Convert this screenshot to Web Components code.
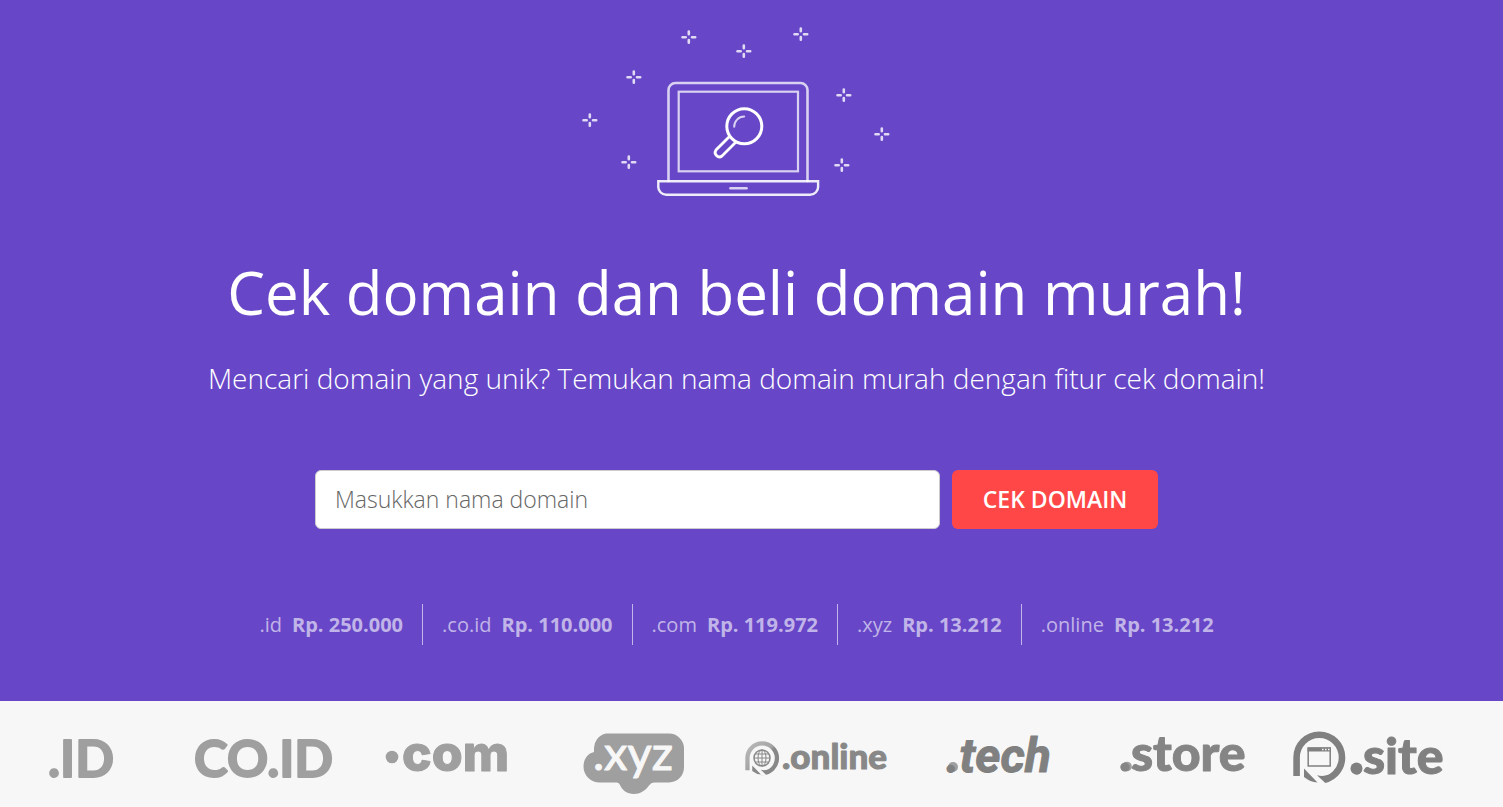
<!DOCTYPE html>
<html lang="id">
<head>
<meta charset="utf-8">
<meta name="viewport" content="width=device-width, initial-scale=1">
<title>Cek domain</title>
<style>
body {
    margin: 0;
    background: #f7f7f7;
    font-family: "Open Sans", "Noto Sans", sans-serif;
}
</style>
</head>
<body>

<domain-hero>
    <laptop-art slot="art"></laptop-art>
    <span slot="title">Cek domain dan beli domain murah!</span>
    <span slot="subtitle">Mencari domain yang unik? Temukan nama domain murah dengan fitur cek domain!</span>
    <domain-search slot="search" placeholder="Masukkan nama domain">CEK DOMAIN</domain-search>
    <domain-price slot="prices" tld=".id">Rp. 250.000</domain-price>
    <domain-price slot="prices" tld=".co.id">Rp. 110.000</domain-price>
    <domain-price slot="prices" tld=".com">Rp. 119.972</domain-price>
    <domain-price slot="prices" tld=".xyz">Rp. 13.212</domain-price>
    <domain-price slot="prices" tld=".online">Rp. 13.212</domain-price>
</domain-hero>

<logo-strip>
    <tld-logo name="id"></tld-logo>
    <tld-logo name="coid"></tld-logo>
    <tld-logo name="com"></tld-logo>
    <tld-logo name="xyz"></tld-logo>
    <tld-logo name="online"></tld-logo>
    <tld-logo name="tech"></tld-logo>
    <tld-logo name="store"></tld-logo>
    <tld-logo name="site"></tld-logo>
</logo-strip>

<script>
const templateHero = document.createElement('template');
templateHero.innerHTML = `
<style>
:host {
    display: block;
    background: #6747c7;
    color: #fff;
}
section {
    display: flex;
    flex-direction: column;
    align-items: center;
    padding: 28px 30px 56px 0;
    text-align: center;
}
h1 {
    margin: 56px 0 0;
    font-size: 60px;
    font-weight: 400;
    line-height: 80px;
}
p {
    margin: 26px 0 0;
    font-size: 28px;
    font-weight: 300;
    line-height: 40px;
}
.search {
    margin-top: 72px;
}
.prices {
    display: flex;
    flex-wrap: wrap;
    justify-content: center;
    margin-top: 75px;
}
::slotted(domain-price:not(:last-child)) {
    border-right: 1px solid rgba(255, 255, 255, .6);
}
</style>
<section>
    <slot name="art"></slot>
    <h1><slot name="title"></slot></h1>
    <p><slot name="subtitle"></slot></p>
    <div class="search"><slot name="search"></slot></div>
    <div class="prices"><slot name="prices"></slot></div>
</section>
`;

class DomainHero extends HTMLElement {

    constructor() {
        super();
        this.attachShadow({mode: 'open'});
        this.shadowRoot.appendChild(templateHero.content.cloneNode(true));
    }
}

customElements.define('domain-hero', DomainHero);

const templateLaptop = document.createElement('template');
templateLaptop.innerHTML = `
<style>
:host {
    display: block;
}
svg {
    display: block;
    overflow: visible;
}
</style>
<svg width="308" height="168" viewBox="0 0 308 168" fill="none" stroke="#fff" stroke-width="2.600" stroke-linecap="round" aria-hidden="true">
    <g stroke-opacity=".75">
        <path d="M85.500 153V62a7 7 0 0 1 7-7h125a7 7 0 0 1 7 7v91"/>
        <rect x="95.700" y="63.700" width="119.300" height="79.600" stroke-width="2.200"/>
        <path d="M147.500 160.300h16"/>
    </g>
    <path d="M75.300 153.300h159.800v5a8 8 0 0 1-8 8.500h-143.800a8 8 0 0 1-8-8.500z" stroke-width="2.400" stroke-opacity=".9"/>
    <circle cx="161.300" cy="98.300" r="17.500" stroke-width="3"/>
    <path d="M151.200 98.800a10 10 0 0 1 10-10.200" stroke-width="2" stroke-opacity=".75"/>
    <path d="M146.500 108.500l-13.500 13.500a4.300 4.300 0 0 0 6 6l13.500-13.500" stroke-width="2.800"/>
    <g class="stars" stroke-opacity=".8"></g>
</svg>
`;

class LaptopArt extends HTMLElement {

    constructor() {
        super();
        this.attachShadow({mode: 'open'});
        this.shadowRoot.appendChild(templateLaptop.content.cloneNode(true));
        const stars = [[106, 9], [161, 23], [218, 6], [51, 49], [7, 92], [46, 134], [261, 67], [299, 106], [259, 137]];
        this.shadowRoot.querySelector('.stars').innerHTML = stars.map(([x, y]) =>
            `<path transform="translate(${x} ${y})" d="M-6.500 .300h3.200M3 .300h3.200M-.200-5.500v2.700M-.200 3v2.700"/>`
        ).join('');
    }
}

customElements.define('laptop-art', LaptopArt);

const templateSearch = document.createElement('template');
templateSearch.innerHTML = `
<style>
:host {
    display: block;
}
form {
    display: flex;
    gap: 12px;
    margin: 0;
}
input, button {
    box-sizing: border-box;
    height: 59px;
    border-radius: 6px;
    font-family: inherit;
    font-size: 23px;
}
input {
    width: 625px;
    padding: 0 19px 2px;
    border: 1px solid #ccc;
    background: #fff;
    color: #555;
    font-weight: 300;
}
input::placeholder {
    color: #666;
    opacity: 1;
}
button {
    width: 206px;
    padding: 0 0 2px;
    border: 0;
    background: #ff4747;
    color: #fff;
    font-weight: 600;
    white-space: nowrap;
    cursor: pointer;
}
</style>
<form>
    <input type="text" name="domain">
    <button type="submit"><slot></slot></button>
</form>
`;

class DomainSearch extends HTMLElement {

    constructor() {
        super();
        this.attachShadow({mode: 'open'});
        this.shadowRoot.appendChild(templateSearch.content.cloneNode(true));
        this.shadowRoot.querySelector('form').addEventListener('submit', e => e.preventDefault());
    }

    connectedCallback() {
        const input = this.shadowRoot.querySelector('input');
        input.placeholder = this.getAttribute('placeholder');
        input.setAttribute('aria-label', input.placeholder);
    }
}

customElements.define('domain-search', DomainSearch);

const templatePrice = document.createElement('template');
templatePrice.innerHTML = `
<style>
:host {
    display: flex;
    gap: 10px;
    padding: 0 19px;
    color: rgba(255, 255, 255, .6);
    font-size: 20px;
    line-height: 41px;
    white-space: nowrap;
}
</style>
<span></span>
<strong><slot></slot></strong>
`;

class DomainPrice extends HTMLElement {

    constructor() {
        super();
        this.attachShadow({mode: 'open'});
        this.shadowRoot.appendChild(templatePrice.content.cloneNode(true));
    }

    connectedCallback() {
        this.shadowRoot.querySelector('span').textContent = this.getAttribute('tld');
    }
}

customElements.define('domain-price', DomainPrice);

const templateStrip = document.createElement('template');
templateStrip.innerHTML = `
<style>
:host {
    display: grid;
    grid-template-columns: repeat(8, 1fr);
    padding: 20px 30px 12px 0;
    background: #f7f7f7;
}
</style>
<slot></slot>
`;

class LogoStrip extends HTMLElement {

    constructor() {
        super();
        this.attachShadow({mode: 'open'});
        this.shadowRoot.appendChild(templateStrip.content.cloneNode(true));
    }
}

customElements.define('logo-strip', LogoStrip);

// open ring with a tail, used by .online and .site
const ring = `
    <path d="M7.600 55V36.500a22.700 22.700 0 1 1 22.700 22.700l-3-.300" fill="none" stroke-width="6.600"/>
    <path d="M15 45l14 7.500 8 10.500h-10l-12-8z" fill="#f7f7f7" stroke="none"/>
    <path d="M15 47.500l13.500 14q-7.500-.500-13.500-5.500z" stroke="none"/>
    <path d="M28 54.300l7.500 7q5-1 8-3l-4-4.500q-5 2-11.500.500z" stroke="none"/>
`;

const logos = {
    id: `<text class="geo" x="48" y="56">.ID</text>`,
    coid: `<text class="geo" x="10" y="56">CO.ID</text>`,
    com: `
        <circle cx="24" cy="36" r="6.300"/>
        <text class="com" x="34" y="50">com</text>`,
    xyz: `
        <path d="M54 12.500h63a15 15 0 0 1 15 15v19a15 15 0 0 1-15 15h-15q-3 0-5 3c-4 5.500-9 8.500-15 8.500-7 0-12-4-14-9q-1-2.500-3-2.500h-17a16 16 0 0 1-16.500-16c0-7 4-13 10.500-14.500v-3a15 15 0 0 1 12-15.500z"/>
        <text class="xyz" x="41" y="49">.xyz</text>`,
    online: `
        <defs>
            <linearGradient id="shade" gradientUnits="userSpaceOnUse" x1="5" y1="14" x2="48" y2="58">
                <stop offset="0" stop-color="#bbb"/>
                <stop offset=".5" stop-color="#a5a5a5"/>
                <stop offset=".6" stop-color="#888"/>
            </linearGradient>
        </defs>
        <g fill="#888" stroke="url(#shade)" transform="translate(5.500 13.500) scale(.65)">${ring}</g>
        <g fill="none" stroke="#888" stroke-width="1.500">
            <circle cx="25" cy="37" r="8"/>
            <ellipse cx="25" cy="37" rx="4" ry="8" stroke-width="1"/>
            <path d="M25 29v16M17 37h16M18.500 33h13M18.500 41h13" stroke-width="1"/>
        </g>
        <text class="online" x="45" y="48">.online</text>`,
    tech: `
        <circle cx="32" cy="46" r="5"/>
        <text class="tech" x="25" y="51">.tech</text>`,
    store: `
        <circle cx="22" cy="45.500" r="4.800"/>
        <text class="store" x="14" y="50">.store</text>`,
    site: `
        <g fill="#808080" stroke="#808080">${ring}</g>
        <path d="M19.200 27h22v18h-22z" fill="none" stroke="#808080" stroke-width="1.500"/>
        <path d="M18.500 26.500h23.500v4h-23.500z" fill="#808080"/>
        <path d="M33 28.500h1.500M36 28.500h1.500M39 28.500h1.500" stroke="#f7f7f7" stroke-width="1.500"/>
        <circle cx="67.500" cy="47.500" r="6" fill="#808080"/>
        <text class="site" x="62" y="53">.site</text>`
};

const templateLogo = document.createElement('template');
templateLogo.innerHTML = `
<style>
:host {
    display: block;
}
svg {
    display: block;
    overflow: visible;
    fill: #9f9f9f;
}
text {
    stroke-linejoin: round;
}
.geo {
    font: 700 51px Lato, sans-serif;
    stroke: #9f9f9f;
    stroke-width: 2px;
}
.com {
    font: 800 50px Inter, sans-serif;
    stroke: #9f9f9f;
    stroke-width: 1px;
}
.xyz {
    font: 400 47px Lato, sans-serif;
    fill: #f7f7f7;
    stroke: #f7f7f7;
    stroke-width: 1px;
}
.online {
    font: 900 35px Lato, sans-serif;
    fill: #888;
    stroke: #888;
    stroke-width: 1px;
}
.tech {
    font: italic 700 48px "Liberation Sans Narrow", Roboto, sans-serif;
    fill: #808080;
    stroke: #808080;
    stroke-width: 1px;
}
.store {
    font: 900 50px Lato, sans-serif;
    fill: #858585;
    stroke: #858585;
    stroke-width: 1px;
}
.site {
    font: 900 50px Lato, sans-serif;
    fill: #808080;
    stroke: #808080;
    stroke-width: 1px;
}
</style>
<svg width="184" height="74" viewBox="0 0 184 74"></svg>
`;

class TldLogo extends HTMLElement {

    constructor() {
        super();
        this.attachShadow({mode: 'open'});
        this.shadowRoot.appendChild(templateLogo.content.cloneNode(true));
    }

    connectedCallback() {
        this.shadowRoot.querySelector('svg').innerHTML = logos[this.getAttribute('name')];
    }
}

customElements.define('tld-logo', TldLogo);
</script>
</body>
</html>
